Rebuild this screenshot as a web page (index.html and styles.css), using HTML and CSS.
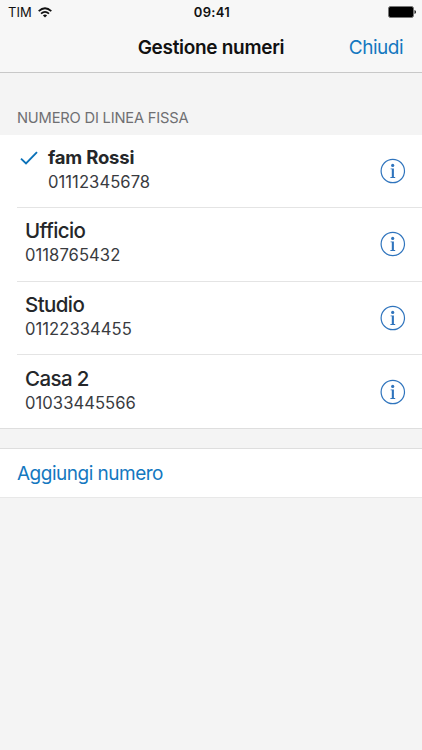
FILE: index.html
```html
<!DOCTYPE html>
<html lang="it">
<head>
  <meta charset="UTF-8" />
  <meta name="viewport" content="width=device-width, initial-scale=1.0"/>
  <title>Gestione numeri</title>
  <link rel="stylesheet" href="styles.css">
</head>
<body>
  <header class="header">
    <div class="status-bar">
      <div class="carrier">
        <span>TIM</span>
        <svg class="wifi" viewBox="0 0 14 11" width="14" height="11">
          <path d="M0.7 4.1 Q7 -1.7 13.3 4.1" fill="none" stroke="#111" stroke-width="1.8"/>
          <path d="M3 6.6 Q7 3 11 6.6" fill="none" stroke="#111" stroke-width="1.6"/>
          <path d="M4.9 8.4 Q7 6.6 9.1 8.4 L7 10.6 Z" fill="#111"/>
        </svg>
      </div>
      <span class="clock">09:41</span>
      <svg class="battery" viewBox="0 0 28 12" width="28" height="12">
        <rect x="0.5" y="0.5" width="25" height="11" rx="2" fill="#000" stroke="#777"/>
        <path d="M26.5 4 Q28 4.4 28 6 T26.5 8 Z" fill="#111"/>
      </svg>
    </div>
    <div class="nav-bar">
      <h1>Gestione numeri</h1>
      <a class="close">Chiudi</a>
    </div>
  </header>

  <h2 class="section-title">NUMERO DI LINEA FISSA</h2>

  <ul class="list">
    <li class="row selected">
      <svg class="check" viewBox="0 0 18 14" width="18" height="14">
        <path d="M1 7.6 L6 12.4 L17 1.2" fill="none" stroke="#0b72b9" stroke-width="1.9"/>
      </svg>
      <div class="line">
        <span class="name">fam Rossi</span>
        <span class="number">01112345678</span>
      </div>
      <svg class="info" viewBox="0 0 26 26" width="26" height="26"><use href="#info"/></svg>
    </li>
    <li class="row">
      <div class="line">
        <span class="name">Ufficio</span>
        <span class="number">0118765432</span>
      </div>
      <svg class="info" viewBox="0 0 26 26" width="26" height="26"><use href="#info"/></svg>
    </li>
    <li class="row">
      <div class="line">
        <span class="name">Studio</span>
        <span class="number">01122334455</span>
      </div>
      <svg class="info" viewBox="0 0 26 26" width="26" height="26"><use href="#info"/></svg>
    </li>
    <li class="row">
      <div class="line">
        <span class="name">Casa 2</span>
        <span class="number">01033445566</span>
      </div>
      <svg class="info" viewBox="0 0 26 26" width="26" height="26"><use href="#info"/></svg>
    </li>
  </ul>

  <a class="add">Aggiungi numero</a>

  <!-- icona info -->
  <svg class="icons">
    <symbol id="info" viewBox="0 0 26 26">
      <circle cx="12.8" cy="13" r="11.7" fill="none" stroke="#2f74bd" stroke-width="1.2"/>
      <circle cx="12.7" cy="7.4" r="1.6" fill="#2f74bd"/>
      <path d="M10.6 10.4 H13.9 V19 H15.2 V19.9 H10.4 V19 H11.8 V11.3 H10.6 Z" fill="#2f74bd"/>
    </symbol>
  </svg>
</body>
</html>
```
FILE: styles.css
```css
* {
  box-sizing: border-box;
}

body {
  margin: 0;
  min-height: 100vh;
  background: #f4f4f4;
  font-family: Inter, "Liberation Sans", sans-serif;
  color: #25272a;
}

h1, h2, ul {
  margin: 0;
  padding: 0;
}

.header {
  height: 73px;
  background: #f7f7f7;
  border-bottom: 1px solid #c8c8c8;
}

.status-bar, .nav-bar {
  display: grid;
  grid-template-columns: 1fr auto 1fr;
  align-items: center;
}

.status-bar {
  height: 24px;
  padding: 0 6px 0 8px;
  font-size: 13px;
  color: #111;
}

.carrier {
  display: flex;
  align-items: center;
  gap: 6px;
}

.clock {
  font-weight: 600;
  letter-spacing: 0.3px;
}

.battery {
  justify-self: end;
}

.nav-bar {
  height: 47px;
  padding: 0 19px 0 19px;
}

.nav-bar h1 {
  grid-column: 2;
  font-size: 19px;
  font-weight: 600;
  letter-spacing: -0.3px;
  color: #111;
}

.close {
  justify-self: end;
  font-size: 19px;
  letter-spacing: -0.5px;
  color: #1478c0;
}

.section-title {
  height: 62px;
  padding: 35px 17px 0;
  font-size: 14.7px;
  line-height: 20px;
  font-weight: 400;
  letter-spacing: -0.2px;
  color: #6f6f72;
}

.list {
  list-style: none;
  background: #fff;
  border-bottom: 1px solid #dedede;
}

.row {
  display: flex;
  align-items: center;
  height: 73.3px;
  margin-left: 17px;
  padding: 0 16px 0 8px;
  border-bottom: 1px solid #e4e4e4;
}

.row:last-child {
  border-bottom: none;
}

.check {
  margin: -26px 10px 0 -5px;
}

.line {
  display: flex;
  flex-direction: column;
  flex: 1;
  padding-bottom: 3px;
}

.name {
  font-size: 20.5px;
  line-height: 25px;
  font-weight: 500;
  letter-spacing: -0.6px;
}

.number {
  font-size: 16.6px;
  line-height: 24px;
  color: #393b3f;
  letter-spacing: 0.05px;
}

.selected .name {
  font-size: 18.5px;
  font-weight: 700;
  letter-spacing: -0.2px;
}

.add {
  display: flex;
  align-items: center;
  height: 50px;
  margin-top: 19px;
  padding-left: 17px;
  background: #fff;
  border-top: 1px solid #dedede;
  border-bottom: 1px solid #e8e8e8;
  font-size: 19px;
  letter-spacing: -0.5px;
  color: #1478c0;
}

.icons {
  display: none;
}
```
